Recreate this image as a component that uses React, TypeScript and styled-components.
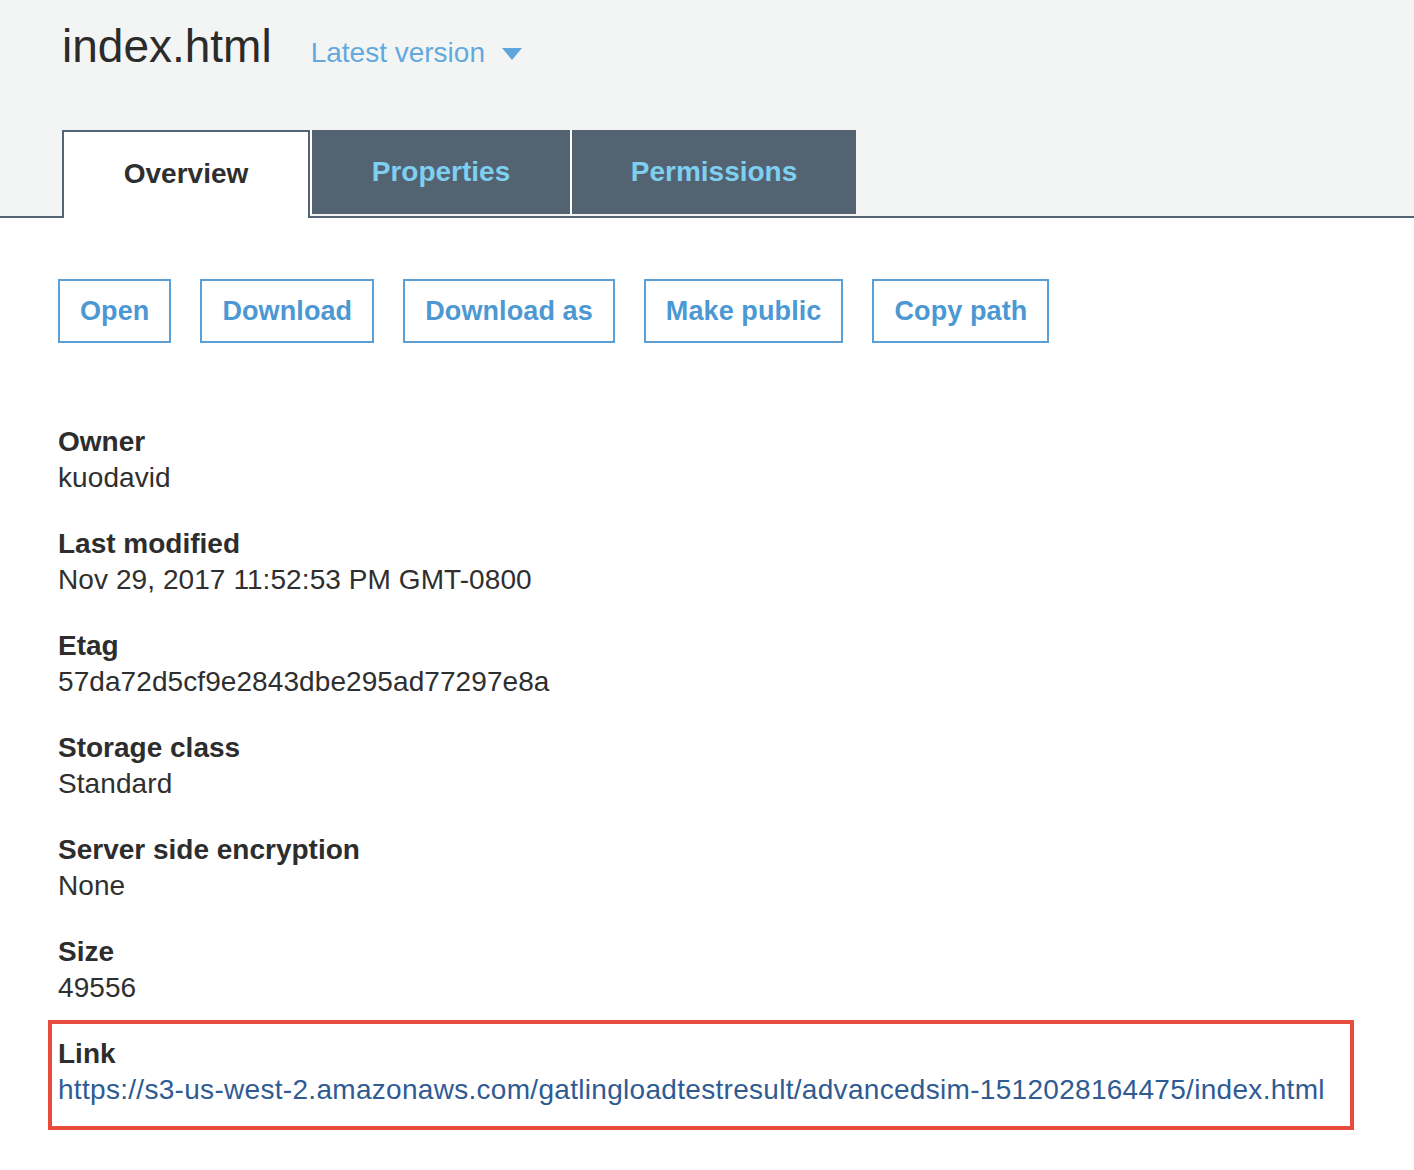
import React from "react";
import styled, { createGlobalStyle } from "styled-components";

const GlobalStyle = createGlobalStyle`
  html, body {
    margin: 0;
    padding: 0;
    background: #ffffff;
  }
  body {
    font-family: "Liberation Sans", Arial, Helvetica, sans-serif;
    color: #333333;
  }
  * { box-sizing: border-box; }
`;

const Page = styled.div`
  width: 1414px;
  min-height: 1170px;
  background: #ffffff;
`;

const Header = styled.header`
  background: #f3f5f4;
  padding-top: 23px;
`;

const TitleRow = styled.div`
  display: flex;
  align-items: baseline;
  padding-left: 62px;
  gap: 39px;
`;

const Title = styled.h1`
  margin: 0;
  font-size: 46px;
  line-height: 46px;
  font-weight: 400;
  color: #2b2b2b;
`;

const VersionPicker = styled.button`
  display: flex;
  align-items: center;
  gap: 17px;
  border: 0;
  background: transparent;
  padding: 0;
  font-family: inherit;
  font-size: 28px;
  color: #63a9de;
  cursor: pointer;
`;

const Caret = styled.svg`
  width: 20px;
  height: 12px;
  fill: #5fa6dd;
  transform: translateY(1px);
`;

const TabBar = styled.nav`
  display: flex;
  align-items: flex-start;
  margin-top: 61px;
  padding-left: 62px;
  border-bottom: 2px solid #546474;
`;

const Tab = styled.div<{ $active?: boolean; $width: number }>`
  width: ${(p) => p.$width}px;
  height: ${(p) => (p.$active ? "88px" : "84px")};
  line-height: 84px;
  font-size: 28px;
  font-weight: 700;
  text-align: center;
  white-space: nowrap;
  cursor: pointer;
  ${(p) =>
    p.$active
      ? `
    background: #ffffff;
    color: #2f2f2f;
    border: 2px solid #546474;
    border-bottom: 0;
    margin-bottom: -2px;
    position: relative;
    z-index: 1;
  `
      : `
    background: #536372;
    color: #7ecff0;
    border-left: 2px solid #ffffff;
  `}
`;

const Content = styled.main`
  padding: 61px 0 40px 58px;
`;

const ActionRow = styled.div`
  display: flex;
  gap: 29px;
`;

const ActionButton = styled.button`
  height: 64px;
  padding: 0 20px;
  border: 2px solid #5a9fd6;
  background: #ffffff;
  color: #4c98d3;
  font-family: inherit;
  font-size: 27px;
  font-weight: 700;
  line-height: 60px;
  letter-spacing: 0.1px;
  cursor: pointer;
  white-space: nowrap;
`;

const FieldList = styled.dl`
  margin: 81px 0 0 0;
  display: flex;
  flex-direction: column;
  gap: 30px;
`;

const Field = styled.div`
  display: flex;
  flex-direction: column;
`;

const HighlightedField = styled(Field)`
  width: 1306px;
  margin: -16px 0 0 -10px;
  padding: 12px 6px 18px 6px;
  border: 4px solid #e74c3c;
`;

const Label = styled.dt`
  font-size: 28px;
  line-height: 36px;
  font-weight: 700;
  color: #2d2d2d;
`;

const Value = styled.dd`
  margin: 0;
  font-size: 28px;
  line-height: 36px;
  color: #2f2f2f;
  white-space: nowrap;
  letter-spacing: 0.08px;
`;

const LinkValue = styled.a`
  color: #2f5b93;
  text-decoration: none;
  letter-spacing: 0.3px;
`;

const fields: { label: string; value: string }[] = [
  { label: "Owner", value: "kuodavid" },
  { label: "Last modified", value: "Nov 29, 2017 11:52:53 PM GMT-0800" },
  { label: "Etag", value: "57da72d5cf9e2843dbe295ad77297e8a" },
  { label: "Storage class", value: "Standard" },
  { label: "Server side encryption", value: "None" },
  { label: "Size", value: "49556" },
];

const tabs = [
  { label: "Overview", width: 248, active: true },
  { label: "Properties", width: 260, active: false },
  { label: "Permissions", width: 286, active: false },
];

const actions = ["Open", "Download", "Download as", "Make public", "Copy path"];

const url =
  "https://s3-us-west-2.amazonaws.com/gatlingloadtestresult/advancedsim-1512028164475/index.html";

export default function App() {
  return (
    <Page>
      <GlobalStyle />
      <Header>
        <TitleRow>
          <Title>index.html</Title>
          <VersionPicker>
            Latest version
            <Caret viewBox="0 0 20 12">
              <polygon points="0,0 20,0 10,12" />
            </Caret>
          </VersionPicker>
        </TitleRow>
        <TabBar>
          {tabs.map((t) => (
            <Tab key={t.label} $active={t.active} $width={t.width}>
              {t.label}
            </Tab>
          ))}
        </TabBar>
      </Header>
      <Content>
        <ActionRow>
          {actions.map((a) => (
            <ActionButton key={a}>{a}</ActionButton>
          ))}
        </ActionRow>
        <FieldList>
          {fields.map((f) => (
            <Field key={f.label}>
              <Label>{f.label}</Label>
              <Value>{f.value}</Value>
            </Field>
          ))}
          <HighlightedField>
            <Label>Link</Label>
            <Value>
              <LinkValue href="#">{url}</LinkValue>
            </Value>
          </HighlightedField>
        </FieldList>
      </Content>
    </Page>
  );
}
